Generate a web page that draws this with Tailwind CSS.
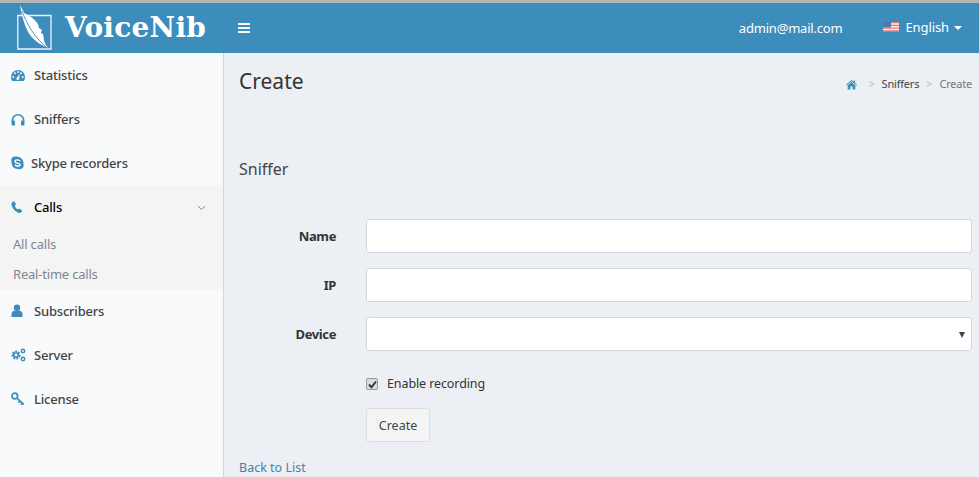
<!DOCTYPE html>
<html lang="en">
<head>
    <meta charset="UTF-8">
    <title>VoiceNib</title>
    <script src="https://cdn.jsdelivr.net/npm/@tailwindcss/browser@4"></script>
</head>
<body class="h-[477px] w-[979px] overflow-hidden bg-[#eceff4] font-['Noto_Sans',sans-serif] text-[12.5px] text-[#333]">
    <!-- Top bar -->
    <div class="h-[3px] bg-[#b5b5b5]"></div>
    <header class="flex h-[50px] items-center bg-[#3c8dbc] text-white">
        <div class="flex w-[224px] items-center pl-[17px]">
            <svg class="mt-[-2px] h-[46px] w-[36px] shrink-0" viewBox="0 0 36 46" fill="none">
                <path d="M.8 11.500H34V45H.8Z" stroke="#fff" stroke-width="1.300" opacity=".9"/>
                <path d="M3 1C4 6 5 13 8 21C11 30 17 38 31 44C26 38 27 34 26 30L24 29L25 26L22 24L21 20C17 14 11 11 7 9C6 6 4 3 3 1Z" fill="#fff"/>
                <path d="M5 7C9 18 16 32 30 44" stroke="#3c8dbc" stroke-width=".9"/>
            </svg>
            <span class="ml-[12px] font-['DejaVu_Serif',serif] text-[28px] leading-none font-bold tracking-[0.25px] whitespace-nowrap">VoiceNib</span>
        </div>
        <svg class="ml-[14px] h-3 w-[12px]" viewBox="0 0 12 12" fill="#fff">
            <rect y="1" width="12" height="2" rx=".5"/><rect y="5" width="12" height="2" rx=".5"/><rect y="9" width="12" height="2" rx=".5"/>
        </svg>
        <div class="ml-auto flex items-center pr-[17px] text-[13px]">
            <span class="mt-[1px] tracking-[-0.2px]">admin@mail.com</span>
            <svg class="mt-[-2px] ml-[41px] h-[10px] w-4" viewBox="0 0 16 10">
                <rect width="16" height="10" fill="#f4f4f4"/>
                <path d="M0 0H16V1.300H0ZM0 2.700H16V4H0ZM0 5.400H16V6.700H0ZM0 8.200H16V10H0Z" fill="#e2736e"/>
                <rect width="8" height="5.500" fill="#5674ad"/>
            </svg>
            <span class="ml-[6px] tracking-[-0.1px]">English</span>
            <span class="ml-[5px] h-0 w-0 border-x-4 border-t-4 border-x-transparent border-t-white"></span>
        </div>
    </header>

    <div class="flex h-[424px]">
        <!-- Sidebar -->
        <aside class="w-[224px] shrink-0 border-r border-[#d2d6de] bg-[#f9fafc] text-[13px] tracking-[-0.2px] text-[#444]">
            <a class="flex h-11 items-center pt-[2px] pl-[11px] font-medium">
                <svg class="h-[14px] w-[14px]" viewBox="0 0 14 14" fill="#3c8dbc"><path d="M7 1A7 7 0 0 0 0 8c0 1.600.4 2.900 1.100 4h11.800c.7-1.100 1.100-2.400 1.100-4a7 7 0 0 0-7-7Z"/><g fill="#f9fafc"><circle cx="2.300" cy="8" r="1"/><circle cx="4" cy="4.300" r="1"/><circle cx="11.700" cy="8" r="1"/><circle cx="10" cy="4.300" r="1"/><circle cx="7" cy="3" r="1"/><path d="M8.600 4.800 8.300 9.300a1.500 1.500 0 1 1-2.300-.9Z"/></g></svg>
                <span class="ml-[9px]">Statistics</span>
            </a>
            <a class="flex h-11 items-center pt-[2px] pl-[11px] font-medium">
                <svg class="h-[14px] w-[14px]" viewBox="0 0 14 14" fill="none"><path d="M1.400 9V7.300a5.600 5.600 0 0 1 11.200 0V9" stroke="#3c8dbc" stroke-width="1.600"/><rect x=".6" y="7.500" width="3.400" height="5" rx="1.200" fill="#3c8dbc"/><rect x="10" y="7.500" width="3.400" height="5" rx="1.200" fill="#3c8dbc"/></svg>
                <span class="ml-[9px]">Sniffers</span>
            </a>
            <a class="flex h-11 items-center pt-[2px] pl-[11px] font-medium">
                <svg class="mt-[-2px] h-[14px] w-[13px]" viewBox="0 0 13 14"><path d="M3.500.6h1.500c.5 0 1 .2 1.500.2a6 6 0 0 1 5.900 6.400c0 .7.300 1.300.3 2.100a3.700 3.700 0 0 1-3.700 3.900c-.7 0-1.300-.3-2-.3A6 6 0 0 1 .6 6.500C.6 5.800.3 5.300.3 4.500A3.700 3.700 0 0 1 3.500.6Z" fill="#3c8dbc"/><path d="M9.200 5.200C8.700 4.300 7.700 3.900 6.500 3.900 5 3.900 4 4.600 4 5.600c0 2.300 5.200 1.200 5.200 3.100 0 .8-1.100 1.300-2.400 1.300-1.200 0-2.100-.4-2.800-1.300" stroke="#fff" stroke-width="1.400" fill="none"/></svg>
                <span class="ml-[7px]">Skype recorders</span>
            </a>
            <div class="h-[104px] bg-[#f4f4f5]">
                <a class="flex h-11 items-center pt-[2px] pl-[11px] font-medium text-black">
                    <svg class="mt-[-2px] h-[14px] w-[12px]" viewBox="0 0 12 14" fill="#3c8dbc"><path d="M1 2.500 3 1l2 3.200-1.200 1.200c.4 1.700 1.600 3.300 3 4.100L8.400 8.500l3 2.300-1.800 2c-1 .6-2.500.2-4-1C3 10.500 1.300 8 .7 5.500.4 4.300.5 3.200 1 2.500Z"/></svg>
                    <span class="ml-[11px]">Calls</span>
                    <svg class="mr-[17px] ml-auto h-[6px] w-[9px]" viewBox="0 0 9 6" fill="none"><path d="M1 1l3.500 3.500L8 1" stroke="#6f93ad" stroke-width="1"/></svg>
                </a>
                <a class="flex h-[30px] items-center pt-[2px] pl-[13px] text-[#80868e]">All calls</a>
                <a class="flex h-[30px] items-center pt-[2px] pl-[13px] text-[#80868e]">Real-time calls</a>
            </div>
            <a class="flex h-11 items-center pt-[2px] pl-[11px] font-medium">
                <svg class="mt-[-2px] h-[14px] w-[12px]" viewBox="0 0 12 14" fill="#3c8dbc"><circle cx="6" cy="3.700" r="3.200"/><path d="M.5 13V10c0-1.800 1.400-3.200 3-3.200h5c1.600 0 3 1.400 3 3.200v3Z"/></svg>
                <span class="ml-[11px]">Subscribers</span>
            </a>
            <a class="flex h-11 items-center pt-[2px] pl-[11px] font-medium">
                <svg class="mt-[-2px] h-[14px] w-[15px]" viewBox="0 0 15 14" fill="none" stroke="#3c8dbc"><circle cx="5" cy="7" r="3" stroke-width="3" stroke-dasharray="1.700 .9"/><circle cx="5" cy="7" r="2.200" stroke-width="1.300"/><circle cx="12" cy="3" r="1.700" stroke-width="1.500"/><circle cx="12" cy="11" r="1.700" stroke-width="1.500"/></svg>
                <span class="ml-[8px]">Server</span>
            </a>
            <a class="flex h-11 items-center pt-[2px] pl-[11px] font-medium">
                <svg class="mt-[-2px] h-[14px] w-[14px]" viewBox="0 0 14 14" fill="none" stroke="#3c8dbc" stroke-width="1.700"><circle cx="3.800" cy="4" r="2.800"/><path d="M5.800 6.200l7 6.300M9 9l-1.500 1.700M11.300 11.200l-1.400 1.600"/></svg>
                <span class="ml-[9px]">License</span>
            </a>
        </aside>

        <!-- Content -->
        <main class="min-w-0 flex-1 pr-[7px] pl-[15px]">
            <div class="flex items-start justify-between">
                <h1 class="pt-[12px] text-[21px] leading-[32px]">Create</h1>
                <div class="flex items-center gap-[7px] pt-[24px] text-[11px] leading-[14px] tracking-[-0.2px]">
                    <svg class="h-[11px] w-[11px]" viewBox="0 0 12 11" fill="#3c8dbc"><path d="M6 .5 0 5.800l.6.700L6 1.900l5.400 4.600.6-.7L9.800 3.900V1H8.300v1.600ZM1.800 6.500V11h3V7.800h2.400V11h3V6.500L6 2.900Z"/></svg>
                    <span class="ml-[5px] text-[#bbb]">&gt;</span>
                    <span class="text-[#444]">Sniffers</span>
                    <span class="text-[#bbb]">&gt;</span>
                    <span class="text-[#777]">Create</span>
                </div>
            </div>
            <h4 class="mt-[60px] text-[16px] leading-[24px] text-[#444]">Sniffer</h4>
            <form class="mt-[38px]">
                <div class="flex h-[49px] items-start">
                    <label class="w-[97px] pt-[8px] text-right text-[13px] font-bold tracking-[-0.4px]">Name</label>
                    <input class="ml-[30px] h-[34px] flex-1 rounded-[3px] border border-[#d2d6de] bg-white" type="text">
                </div>
                <div class="flex h-[49px] items-start">
                    <label class="w-[97px] pt-[8px] text-right text-[13px] font-bold tracking-[-0.4px]">IP</label>
                    <input class="ml-[30px] h-[34px] flex-1 rounded-[3px] border border-[#d2d6de] bg-white" type="text">
                </div>
                <div class="flex h-[49px] items-start">
                    <label class="w-[97px] pt-[8px] text-right text-[13px] font-bold tracking-[-0.4px]">Device</label>
                    <div class="relative ml-[30px] h-[34px] flex-1 rounded-[3px] border border-[#d2d6de] bg-white">
                        <span class="absolute top-[14px] right-[6px] h-0 w-0 border-x-[3px] border-t-[6px] border-x-transparent border-t-[#444]"></span>
                    </div>
                </div>
                <div class="mt-[9px] ml-[127px] flex items-center">
                    <span class="flex h-[12px] w-[12px] items-center justify-center rounded-[2px] border border-[#999] bg-[#dcdcdc]">
                        <svg class="h-[9px] w-[9px]" viewBox="0 0 9 9" fill="none"><path d="M1 4.500l2.500 2.800L8 1.500" stroke="#333" stroke-width="2"/></svg>
                    </span>
                    <span class="ml-[9px] tracking-[-0.1px]">Enable recording</span>
                </div>
                <button class="mt-[14px] ml-[127px] block h-[34px] w-[64px] rounded-[3px] border border-[#ddd] bg-[#f4f4f4] pt-[3px] text-[#444]" type="button">Create</button>
            </form>
            <a class="mt-[17px] block text-[#4a7fa8]">Back to List</a>
        </main>
    </div>
</body>
</html>
